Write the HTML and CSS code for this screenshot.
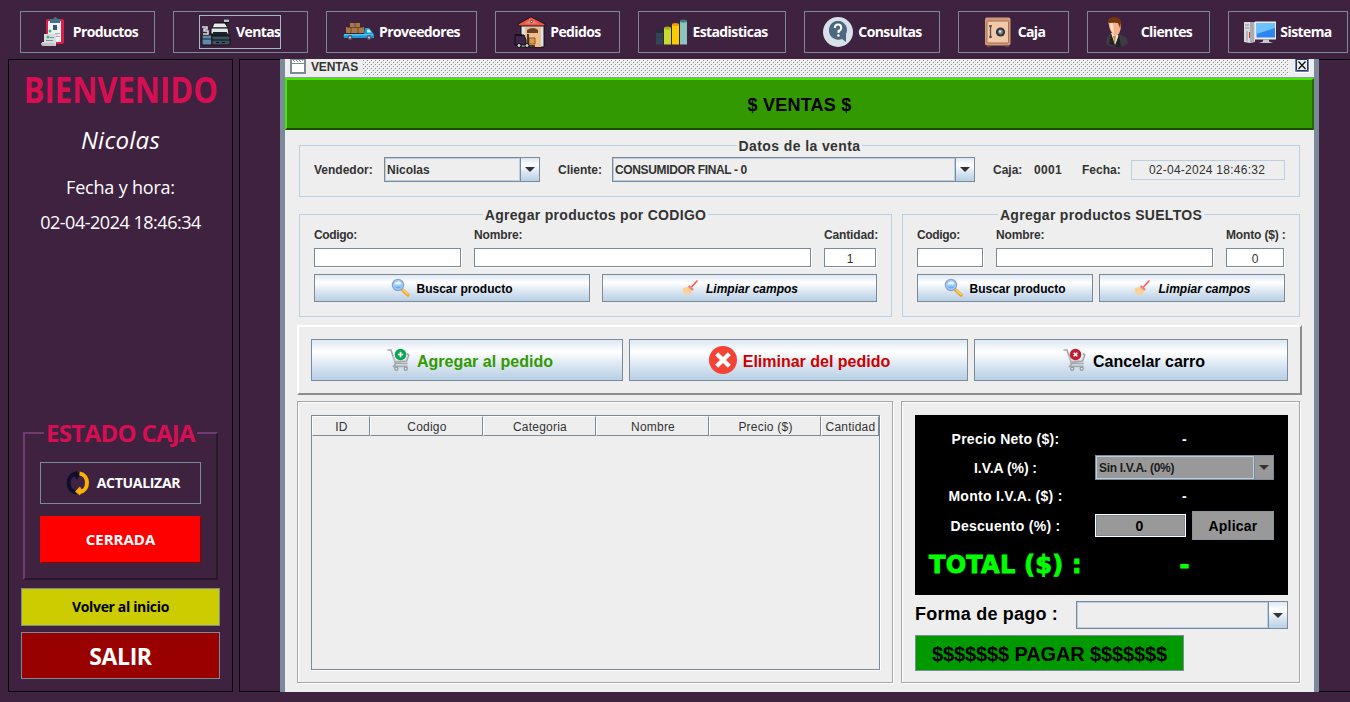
FILE: index.html
```html
<!DOCTYPE html>
<html lang="es">
<head>
<meta charset="utf-8">
<title>Ventas</title>
<link rel="stylesheet" href="styles.css">
</head>
<body>
<svg class="defs" width="0" height="0">
  <defs>
    <symbol id="lens" viewBox="0 0 20 20">
      <path d="M11.5 12 17 17" stroke="#e8a92c" stroke-width="3.6" stroke-linecap="round"/>
      <path d="M11.8 11.6 17 16.2" stroke="#ffd87a" stroke-width="1.2" stroke-linecap="round"/>
      <circle cx="7" cy="7" r="5.6" fill="#9cccfb" stroke="#8fa3c8" stroke-width="1.3"/>
      <path d="M3.2 6.5A4 4 0 0 1 10.6 5.4C8.500 7.500 5.500 6 3.200 6.500Z" fill="#e4f4ff"/>
      <path d="M3.500 8.500a4 4 0 0 0 7 0z" fill="#69aef5"/>
    </symbol>
    <symbol id="broom" viewBox="0 0 20 20">
      <path d="M16 3 10 9.500" stroke="#f2645a" stroke-width="1.700" stroke-linecap="round"/>
      <path d="M7.500 8 12 12" stroke="#f0857a" stroke-width="2.500"/>
      <path d="M6.500 9 11 13 9 16.500 2 13.500C4 13 5 11 6.500 9Z" fill="#fbc98a"/>
      <path d="M2 10 7 9 9 13 8.500 17 4 16.500 1.500 13Z" fill="#fbd09a"/>
    </symbol>
    <symbol id="cart" viewBox="0 0 32 32">
      <path d="M6.500 6H10l4.500 13.500h12.200M25.800 9.500 27.700 11 25.500 17.300 14 18M14.500 19.500 12.800 22.300h13.800" fill="none" stroke="#a4a7ab" stroke-width="1.700"/>
      <path d="M12 12l2 5 11-.8 1.500-4" fill="none" stroke="#c6cbd0" stroke-width="1"/>
      <circle cx="15.300" cy="24.800" r="1.600" fill="#ddd" stroke="#97999c" stroke-width="1.200"/>
      <circle cx="24.700" cy="24.800" r="1.600" fill="#ddd" stroke="#97999c" stroke-width="1.200"/>
    </symbol>
    <pattern id="bumps" width="4" height="4" patternUnits="userSpaceOnUse">
      <path d="M0 0h1v1H0zM2 2h1v1H2z" fill="#7f8a94"/>
      <path d="M1 1h1v1H1zM3 3h1v1H3z" fill="#fff"/>
    </pattern>
  </defs>
</svg>

<nav class="toolbar">
  <button class="tool w135"><svg class="icon" viewBox="0 0 32 32"><rect x="9" y="3" width="18" height="25" rx="2" fill="#dc1f48"/><path d="M11 5h13v21H11z" fill="#eef0f2"/><path d="M13 3h3l2-2h1l2 2h2v4H13z" fill="#44708c"/><path d="M16 9h4v5h-4z" fill="#315a75"/><path d="M18 17h5v1h-5zM18 20h5v1h-5z" fill="#9fb4c0"/><path d="M7 18h14v2h-2v10H6q-2-1-1-4h2z" fill="#d9dcde"/><path d="M4 27h13l2 3H7q-3 0-3-3z" fill="#c1c4c6"/><circle cx="13" cy="15" r="1.500" fill="#39b76d"/><circle cx="11" cy="21" r="1.500" fill="#39b76d"/><path d="M13 21h4v1h-4zM9 24h7v1H9z" fill="#6d93a5"/></svg><span>Productos</span></button>
  <button class="tool w135"><span class="focus"><svg class="icon" viewBox="0 0 32 32"><path d="M24 3h5v4h-2v4h-2V7h-1z" fill="#111"/><path d="M24 3.500h5v2.500h-5z" fill="#b4c2cc"/><path d="M12 12 14 7h11l3 5z" fill="#e9edf0" stroke="#111"/><path d="M11 12h17l1 6H11z" fill="#dfe5e9" stroke="#111"/><path d="M13 16h14v4H13z" fill="#1a2229"/><path d="M2 19h10v10H2z" fill="#5f8ba8" stroke="#111"/><path d="M12 20h18v9H12z" fill="#3d5364" stroke="#111"/><path d="M12 24h18M16 26.500h3M22 26.500h3" stroke="#0c1116"/><path d="M2 23h10" stroke="#223"/><path d="M2 11h5v2H4v2h4v3H3" fill="none" stroke="#ddd" stroke-width="1.500"/></svg><span>Ventas</span></span></button>
  <button class="tool w151"><svg class="icon" viewBox="0 0 32 32"><path d="M7 7h10v4h4v6H3v-6h4z" fill="#a97848"/><path d="M4 11.500h16M12 7v4M8 12v5M15 12v5" stroke="#5c3c22" stroke-width=".8"/><path d="M22 12h4l4 5 1 2v3H1q-1-2 0-4h20z" fill="#199bd8"/><path d="M1 18h29v1.500H1z" fill="#53c5f2"/><path d="M24 13.500h2.500l2 3H24z" fill="#c7effc"/><circle cx="7" cy="21.500" r="2.400" fill="#525b62"/><circle cx="7" cy="21.500" r="1.100" fill="#ccc"/><circle cx="26" cy="21.500" r="2.400" fill="#525b62"/><circle cx="26" cy="21.500" r="1.100" fill="#ccc"/></svg><span>Proveedores</span></button>
  <button class="tool w125"><svg class="icon" viewBox="0 0 32 32"><path d="M7 9h23v22H7z" fill="#dce3ea" stroke="#111"/><path d="M11 11h16v20H11z" fill="#efbd8b"/><path d="M13 14q6-4 11 0v3H13z" fill="#6b4025"/><path d="M17 .8 31 8v2H4V8z" fill="#eb5648" stroke="#161014"/><path d="m17 3.500 7 4H11z" fill="#f3877a"/><circle cx="17.500" cy="5.500" r="1.100" fill="#fff" stroke="#111" stroke-width=".6"/><path d="M15 22h6v6h-6z" fill="#dc9b4e" stroke="#8a5624"/><path d="M1 19h9l2 5v5H1z" fill="#3d2449" stroke="#0c0810"/><path d="M1 19h7" stroke="#111" stroke-width="1.500"/><path d="M14 18v12h7" fill="none" stroke="#111" stroke-width="1.500"/><circle cx="5" cy="29.500" r="2" fill="#c9d1d7" stroke="#111"/><circle cx="13" cy="29.500" r="2" fill="#c9d1d7" stroke="#111"/></svg><span>Pedidos</span></button>
  <button class="tool w148"><svg class="icon" viewBox="0 0 32 32"><path d="M0 15.500h7v13H0z" fill="#314553"/><path d="M8 12h7v16.500H8z" fill="#c7dc32"/><path d="M16 8.500h7v20h-7z" fill="#fbcb05"/><path d="M24 5h7v23.500h-7z" fill="#8dc3bd"/><ellipse cx="3.500" cy="15.500" rx="3.500" ry="1.500" fill="#202f3a"/><ellipse cx="11.500" cy="12" rx="3.500" ry="1.500" fill="#9cb51c"/><ellipse cx="19.500" cy="8.500" rx="3.500" ry="1.500" fill="#f19b08"/><ellipse cx="27.500" cy="5" rx="3.500" ry="1.500" fill="#3f7f74"/></svg><span>Estadisticas</span></button>
  <button class="tool w136"><svg class="icon" viewBox="0 0 32 32"><circle cx="16" cy="16" r="15" fill="#d8e1ea"/><path d="M7 14a9 9 0 1 1 17 4v8l-4-3A9.300 9 0 0 1 7 14z" fill="#4c677f"/><path d="M12.800 12q0-3.500 3.200-3.500t3.200 3-2.700 3.500v2" fill="none" stroke="#fff" stroke-width="2"/><circle cx="16.400" cy="19.500" r="1.300" fill="#fff"/></svg><span>Consultas</span></button>
  <button class="tool w111"><svg class="icon" viewBox="0 0 32 32"><rect x="3" y="1.500" width="25.500" height="28" rx="2" fill="#d09a78"/><rect x="5" y="5" width="21.500" height="22" rx="1" fill="#f0c9ab" stroke="#a86f52"/><path d="M5 30.500h4M23 30.500h4" stroke="#694535" stroke-width="1.500"/><path d="M8.500 9v13M7 10h3M7 21h3" stroke="#5d4c45" stroke-width="1.300"/><circle cx="18.500" cy="16" r="4.600" fill="#33363a"/><circle cx="18.500" cy="16" r="2.400" fill="#8a9096"/><circle cx="18" cy="15.500" r="1" fill="#f4f4f4"/></svg><span>Caja</span></button>
  <button class="tool w123"><svg class="icon" viewBox="0 0 32 32"><path d="M1 27q0-7 5-10l6-1 4 3q7 2 7 8-2 4-11 4T1 27z" fill="#3b3b41"/><path d="m6 17 4 12 4-9-3-3z" fill="#e7e2dc"/><path d="m8 20 1.500 9 1.500-9z" fill="#c9913e"/><path d="m6 18 4 12-6-2zM14 18l-4 13h6z" fill="#222227"/><path d="M3.500 7q0-4.500 6-4.500T16 8q0 11-6 12Q5 17 3.500 7z" fill="#f5b287"/><path d="M5 9q0-3 3-4l1 13q-4-3-4-9z" fill="#ffdcc0"/><path d="M3 5.500Q3 1 9.500 1 16 1 16 7l-1 5-2-5q-5-.5-9 0z" fill="#74350f"/></svg><span>Clientes</span></button>
  <button class="tool w120"><svg class="icon" viewBox="0 0 32 32"><path d="M0 6h11v20l-5 1-6-1z" fill="#d9dadd"/><path d="M6 6h4v20H6z" fill="#a9abb0"/><path d="M1 9h4M1 12h4M3 15v10" stroke="#8d8f94"/><path d="M5.500 16v6" stroke="#d33"/><path d="M11 5.500h21v18H11z" fill="#ecedf0"/><path d="M12.500 7H31v14.500H12.500z" fill="#2c86ef"/><path d="M12.500 7H31v5l-18.500 6z" fill="#6dc1ff"/><path d="M19 23.500h6v2l4 1.500H15l4-1.500z" fill="#c7c9cd"/></svg><span>Sistema</span></button>
</nav>

<main class="workspace">
  <aside class="side">
    <h1>BIENVENIDO</h1>
    <p class="user">Nicolas</p>
    <p class="when-label">Fecha y hora:</p>
    <p class="when">02-04-2024 18:46:34</p>
    <fieldset class="cash">
      <legend>ESTADO CAJA</legend>
      <button class="refresh"><svg width="32" height="32" viewBox="0 0 32 32"><path d="M15.500 25.500C5 24 5 8 15 6.700" fill="none" stroke="#0d0f2d" stroke-width="4"/><path d="m14.500 3.500 5.500 3.500-4 5.500-3-3.500z" fill="#0d0f2d"/><path d="M18.500 6.500C28.500 8 28.500 23.500 18.500 25" fill="none" stroke="#fbb006" stroke-width="4"/><path d="m19 28.500-5-4 5-5 2 4z" fill="#fbb006"/></svg><span>ACTUALIZAR</span></button>
      <div class="closed">CERRADA</div>
    </fieldset>
    <button class="back">Volver al inicio</button>
    <button class="exit">SALIR</button>
  </aside>

  <section class="desk">
    <div class="frame">
      <header class="titlebar">
        <svg class="frame-icon" width="16" height="16" viewBox="0 0 16 16"><path d="M1 0h14v14H1z" fill="#fff" stroke="#7a8a99" stroke-width="2"/><path d="M2 4.500h12" stroke="#7a8a99"/><path d="M3 1h1v1H3zM6 1h1v1H6zM9 1h1v1H9zM12 1h1v1h-1zM4 2h1v1H4zM7 2h1v1H7zM10 2h1v1h-1z" fill="#7a8a99"/></svg>
        <span class="frame-name">VENTAS</span>
        <svg class="bumps" width="926" height="15"><rect width="926" height="15" fill="url(#bumps)"/></svg>
        <svg class="close" width="15" height="14" viewBox="0 0 15 14"><path d="M0 0h15v14H0z" fill="#fff"/><path d="M.5 0v12.500h13V0" fill="#eee" stroke="#6382bf"/><path d="M1.500 0v.5h11v11h-11V0" fill="none" stroke="#29334d"/><path d="m3.500 2.500 7 7.500m0-7.500-7 7.500" stroke="#111" stroke-width="1.300"/></svg>
      </header>
      <div class="banner">$ VENTAS $</div>

      <div class="content">
        <fieldset class="group sale">
          <legend>Datos de la venta</legend>
          <div class="sale-row">
            <label class="l70">Vendedor:</label>
            <div class="combo seller"><span>Nicolas</span><i></i></div>
            <label class="l54">Cliente:</label>
            <div class="combo client"><span class="tight">CONSUMIDOR FINAL - 0</span><i></i></div>
            <label class="l41">Caja:</label>
            <label class="l48">0001</label>
            <label class="l49">Fecha:</label>
            <div class="date">02-04-2024 18:46:32</div>
          </div>
        </fieldset>

        <div class="adders">
          <fieldset class="group by-code">
            <legend>Agregar productos por CODIGO</legend>
            <div class="fields">
              <label class="narrow">Codigo:</label><label>Nombre:</label><label>Cantidad:</label>
              <div class="field"></div><div class="field"></div><div class="field">1</div>
            </div>
            <div class="actions">
              <button class="metal"><svg width="20" height="20"><use href="#lens"/></svg><span>Buscar producto</span></button>
              <button class="metal slanted"><svg width="20" height="20"><use href="#broom"/></svg><span>Limpiar campos</span></button>
            </div>
          </fieldset>
          <fieldset class="group loose">
            <legend>Agregar productos SUELTOS</legend>
            <div class="fields">
              <label class="narrow">Codigo:</label><label>Nombre:</label><label>Monto ($) :</label>
              <div class="field"></div><div class="field"></div><div class="field">0</div>
            </div>
            <div class="actions">
              <button class="metal"><svg width="20" height="20"><use href="#lens"/></svg><span>Buscar producto</span></button>
              <button class="metal slanted"><svg width="20" height="20"><use href="#broom"/></svg><span>Limpiar campos</span></button>
            </div>
          </fieldset>
        </div>

        <div class="order-actions">
          <button class="metal big add"><svg width="32" height="32" viewBox="0 0 32 32"><use href="#cart"/><circle cx="19.500" cy="10.500" r="5.800" fill="#08a650"/><path d="M19.500 7.800v5.400M16.800 10.500h5.400" stroke="#fff" stroke-width="1.700"/></svg><span>Agregar al pedido</span></button>
          <button class="metal big remove"><svg width="32" height="32" viewBox="0 0 32 32"><circle cx="16" cy="16" r="14" fill="#f44336"/><path d="m9.700 9.700 12.600 12.600m0-12.600L9.700 22.300" stroke="#fff" stroke-width="4.200"/></svg><span>Eliminar del pedido</span></button>
          <button class="metal big cancel"><svg width="32" height="32" viewBox="0 0 32 32"><use href="#cart"/><circle cx="18.500" cy="10.500" r="5.800" fill="#c01f33"/><path d="m16.700 8.700 3.600 3.600m0-3.600-3.600 3.600" stroke="#fff" stroke-width="1.600"/></svg><span>Cancelar carro</span></button>
        </div>

        <div class="bottom">
          <div class="etched list">
            <div class="table">
              <div class="thead"><span>ID</span><span>Codigo</span><span>Categoria</span><span>Nombre</span><span>Precio ($)</span><span>Cantidad</span></div>
            </div>
          </div>
          <div class="etched pay">
            <div class="totals">
              <span>Precio Neto ($):</span><b>-</b>
              <span class="iva">I.V.A (%) :</span><div class="combo gray"><span>Sin I.V.A. (0%)</span><i></i></div>
              <span>Monto I.V.A. ($) :</span><b>-</b>
              <span>Descuento (%) :</span>
              <div class="discount"><div class="amount">0</div><button class="apply">Aplicar</button></div>
              <span class="total">TOTAL ($) :</span><b class="total">-</b>
            </div>
            <div class="method"><span>Forma de pago :</span><div class="combo payment"><span></span><i></i></div></div>
            <button class="checkout">$$$$$$$ PAGAR $$$$$$$</button>
          </div>
        </div>
      </div>
    </div>
  </section>
</main>
</body>
</html>
```
FILE: styles.css
```css
* { box-sizing: border-box; }
html, body { margin: 0; height: 702px; overflow: hidden; }
body {
  width: 1350px;
  background: #3f2240;
  color: #333;
  font: bold 12px "Liberation Sans", Arial, sans-serif;
}
.defs { display: block; }
p, h1 { margin: 0; }
button { font: inherit; padding: 0; margin: 0; white-space: nowrap; }
fieldset { margin: 0; padding: 0; min-width: 0; }
svg { flex: none; }

/* toolbar */
.toolbar {
  display: flex;
  gap: 18px;
  height: 59px;
  padding: 11px 0 0 20px;
}
.tool {
  flex: none;
  display: flex;
  align-items: center;
  justify-content: center;
  gap: 4px;
  height: 42px;
  background: transparent;
  border: 1px solid #7a8a99;
  color: #fff;
  font: 700 14px/20px "Open Sans", sans-serif;
  letter-spacing: -0.6px;
}
.icon { width: 32px; height: 32px; }
.focus { display: flex; align-items: center; gap: 4px; width: 80px; margin-right: 1px; outline: 1px solid #a3b8cc; }
.w111 { width: 111px; }
.w120 { width: 120px; }
.w123 { width: 123px; }
.w125 { width: 125px; }
.w135 { width: 135px; }
.w136 { width: 136px; }
.w148 { width: 148px; }
.w151 { width: 151px; }

.workspace { display: flex; gap: 6px; height: 633px; padding-left: 8px; }

/* sidebar */
.side {
  flex: none;
  display: flex;
  flex-direction: column;
  width: 225px;
  padding: 9px 12px 12px;
  border: 1px solid #000;
  color: #fff;
  font-family: "Open Sans", sans-serif;
  text-align: center;
  white-space: nowrap;
}
.side h1 {
  align-self: center;
  font-size: 36px;
  font-weight: 700;
  line-height: 42px;
  height: 40px;
  color: #d70f52;
  transform: scaleX(0.86);
}
.user { margin-top: 16px; font-size: 24px; font-style: italic; font-weight: 400; line-height: 30px; letter-spacing: 0.25px; }
.when-label { margin-top: 20px; font-size: 18px; font-weight: 400; line-height: 25px; height: 24px; letter-spacing: -0.2px; }
.when { margin-top: 11px; font-size: 18px; font-weight: 400; line-height: 24px; letter-spacing: -0.48px; }
.cash {
  height: 162px;
  margin: auto 2px 8px;
  padding: 0 15px;
  border: 2px solid;
  border-color: #6f3c71 #2c182d #2c182d #6f3c71;
}
.cash legend { margin: 0 auto; padding: 0 2px; font-size: 24px; font-weight: 700; line-height: 30px; letter-spacing: -0.7px; color: #d70f52; }
.refresh {
  display: flex;
  align-items: center;
  justify-content: center;
  gap: 4px;
  width: 161px;
  height: 42px;
  margin-top: 14px;
  background: transparent;
  border: 1px solid #7a8a99;
  color: #fff;
  font-size: 14px;
  font-weight: 700;
  letter-spacing: -0.3px;
}
.refresh span { margin-top: -2px; }
.closed {
  width: 161px;
  height: 47px;
  margin-top: 12px;
  background: #f00;
  border: 1px solid;
  border-color: #f00 #8f0000 #8f0000 #f00;
  font-size: 15px;
  font-weight: 700;
  line-height: 45px;
  letter-spacing: 0;
}
.back { height: 38px; padding-bottom: 1px; background: #cccc00; border: 1px solid #7a8a99; color: #000; font-size: 14px; font-weight: 700; letter-spacing: -0.35px; }
.exit { height: 47px; margin-top: 6px; background: #990000; border: 1px solid #7a8a99; color: #fff; font-size: 23px; font-weight: 700; letter-spacing: -0.4px; }

/* internal window */
.desk {
  flex: 1;
  padding-left: 40px;
  border: 1px solid #000;
  border-right: 0;
}
.frame {
  width: 1039px;
  height: 633px;
  margin: -1px 0;
  background: #eee;
  border: solid #7a8a99;
  border-width: 0 5px;
}
.titlebar {
  display: flex;
  height: 19px;
  padding-left: 5px;
  border-bottom: 1px solid #8e9aa6;
}
.frame-name { width: 57px; padding-left: 5px; line-height: 17px; letter-spacing: -0.13px; }
.bumps { margin: 1px 6px 0 0; }
.banner {
  height: 52px;
  background: #339900;
  border: 2px solid;
  border-color: #49e600 #236b00 #194b00 #49e600;
  color: #000;
  font-size: 18px;
  line-height: 51px;
  letter-spacing: 0.23px;
  text-align: center;
}
.content { padding: 6px 12px 0; }

.group { border: 1px solid #b8cfe5; padding: 0 14px; }
.group legend { height: 19px; margin: 0 auto; padding: 0 2px; font-size: 14px; line-height: 21px; letter-spacing: 0.3px; white-space: nowrap; }
.sale { width: 1001px; height: 61px; margin-left: 2px; }
.sale legend { letter-spacing: 0.4px; }
.sale-row { display: flex; align-items: center; height: 25px; margin-top: 2px; }
.l70 { width: 70px; }
.l54 { width: 54px; margin-left: 18px; }
.l41 { width: 41px; margin-left: 18px; }
.l48 { width: 48px; letter-spacing: 0.3px; }
.l49 { width: 49px; }
.date {
  width: 154px;
  height: 20px;
  padding-right: 2px;
  border: 1px solid #b8cfe5;
  font-weight: 400;
  line-height: 18px;
  letter-spacing: 0.25px;
  text-align: center;
}

.combo { display: flex; height: 25px; border: 1px solid #7a8a99; white-space: nowrap; }
.combo span { flex: 1; border: 1px solid #b8cfe5; padding-left: 1px; line-height: 22px; }
.combo i {
  display: flex;
  align-items: center;
  justify-content: center;
  width: 19px;
  border-left: 1px solid #7a8a99;
  background: linear-gradient(#dde8f3, #fff 30%, #dde8f3 60%, #b8cfe5);
}
.combo i::after { content: ""; border: 5px solid transparent; border-top-color: #333; border-bottom: 0; }
.seller { width: 156px; }
.client { width: 363px; }
.tight { letter-spacing: -0.36px; }

.adders { display: flex; gap: 10px; margin: 8px 0 0 2px; }
.by-code { width: 593px; height: 112px; }
.loose { width: 398px; height: 112px; }
.fields { display: grid; grid-template-rows: 24px 19px; column-gap: 13px; }
.by-code .fields { grid-template-columns: 147px 337px 52px; }
.loose .fields { grid-template-columns: 66px 217px 58px; }
.fields label { line-height: 22px; white-space: nowrap; letter-spacing: -0.15px; }
.fields .narrow { letter-spacing: -0.33px; }
.field {
  background: #fff;
  border: 1px solid #7a8a99;
  box-shadow: 1px 1px 0 #fff;
  font-weight: 400;
  line-height: 20px;
  text-align: center;
}
.actions { display: grid; margin-top: 7px; }
.by-code .actions { grid-template-columns: 276px 275px; column-gap: 12px; }
.loose .actions { grid-template-columns: 176px 186px; column-gap: 6px; }
.metal {
  display: flex;
  align-items: center;
  justify-content: center;
  gap: 5px;
  height: 28px;
  border: 1px solid #7a8a99;
  background: linear-gradient(#dde8f3, #fff 30%, #dde8f3 60%, #b8cfe5);
  color: #000;
}
.metal span { padding-top: 2px; }
.slanted { font-style: italic; }

.order-actions {
  display: grid;
  grid-template-columns: 312px 339px 314px;
  gap: 6px;
  width: 1005px;
  height: 70px;
  margin-top: 8px;
  padding: 12px;
  border: 2px solid;
  border-color: #fff #8d8d8d #8d8d8d #fff;
}
.big { gap: 4px; height: 42px; font-size: 16px; }
.big span { padding-top: 4px; }
.add { color: #339900; }
.remove { color: #cc0000; }

.bottom { display: flex; gap: 8px; margin-top: 6px; }
.etched { height: 282px; border: 1px solid #a6a6a6; box-shadow: inset 1px 1px 0 #fff, 1px 1px 0 #fff; }
.list { width: 596px; padding: 13px; }
.table { width: 569px; height: 255px; border: 1px solid #7a8a99; box-shadow: 1px 1px 0 #fff; }
.thead { display: grid; grid-template: 20px / 58px 113px 113px 113px 112px 58px; }
.thead span {
  padding-left: 1px;
  border: 1px solid;
  border-color: #fff #7a8a99 #7a8a99 #fff;
  font-weight: 400;
  line-height: 20px;
  letter-spacing: 0.22px;
  text-align: center;
}

.pay { width: 399px; padding: 13px; }
.totals {
  display: grid;
  grid-template-columns: 153px 179px;
  grid-template-rows: 28px 29px 28px 31px 48px;
  column-gap: 13px;
  align-items: center;
  width: 373px;
  height: 180px;
  padding: 10px 14px 0;
  background: #000;
  color: #fff;
  font-size: 14px;
  letter-spacing: 0.28px;
  text-align: center;
  white-space: nowrap;
}
.totals .iva { letter-spacing: -0.05px; }
.totals .total {
  color: #0f0;
  font: bold 24px "DejaVu Sans", sans-serif;
  letter-spacing: 0.25px;
  -webkit-text-stroke: 0.9px #0f0;
}
.gray { background: #999; color: #1c1c1c; font-size: 12px; letter-spacing: -0.3px; text-align: left; }
.gray span { padding-left: 2px; }
.gray i { background: #999; }
.discount { display: flex; align-items: center; justify-content: space-between; color: #000; }
.amount { width: 91px; height: 23px; padding-right: 2px; background: #999; border: 1px solid #fff; box-shadow: inset 1px 1px 0 #7a8a99, inset -1px -1px 0 #7a8a99; line-height: 22px; }
.apply { width: 82px; height: 29px; background: #999; border: 1px solid #8a929a; color: #000; letter-spacing: 0.2px; }
.method { display: flex; justify-content: space-between; width: 373px; margin-top: 6px; color: #000; font-size: 18px; letter-spacing: 0.2px; line-height: 26px; }
.payment { width: 212px; height: 28px; }
.checkout { width: 269px; height: 36px; margin-top: 6px; padding-top: 2px; background: #009900; border: 1px solid #7a8a99; color: #000; font-size: 20px; letter-spacing: -0.12px; }
```
